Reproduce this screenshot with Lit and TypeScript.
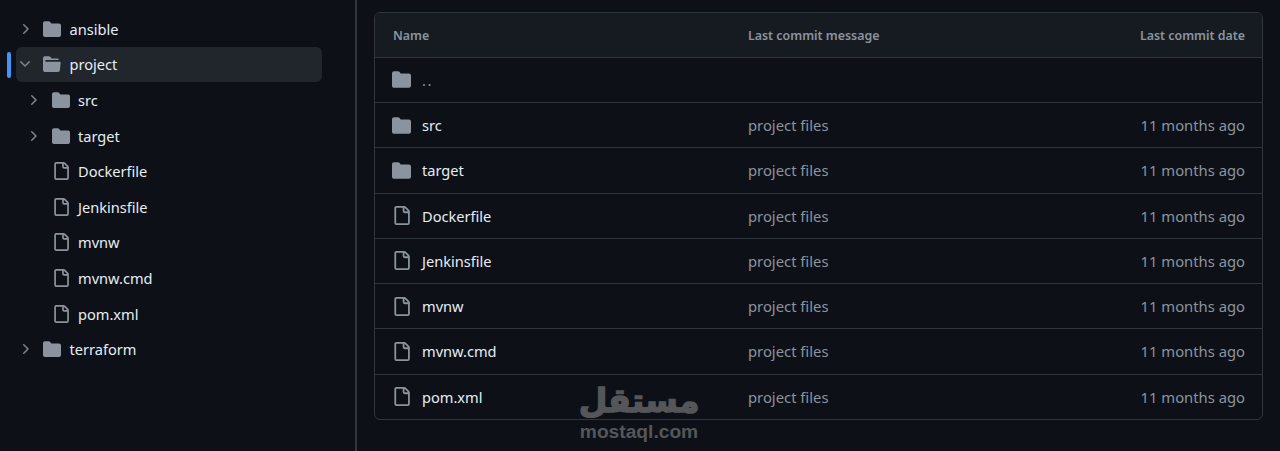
import { LitElement, html, css, svg } from "lit";
import { customElement } from "lit/decorators.js";

const P = {
  folder: "M1.75 1A1.75 1.75 0 0 0 0 2.75v10.5C0 14.216.784 15 1.75 15h12.5A1.75 1.75 0 0 0 16 13.25v-8.5A1.75 1.75 0 0 0 14.25 3H7.5a.25.25 0 0 1-.2-.1l-.9-1.2C6.07 1.26 5.55 1 5 1H1.75Z",
  open: "M.513 1.513A1.75 1.75 0 0 1 1.75 1h3.5c.55 0 1.07.26 1.4.7l.9 1.2a.25.25 0 0 0 .2.1H13a1 1 0 0 1 1 1v.5H2.75a.75.75 0 0 0 0 1.5h11.978a1 1 0 0 1 .994 1.117L15 13.25A1.75 1.75 0 0 1 13.25 15H1.75A1.75 1.75 0 0 1 0 13.25V2.75c0-.464.184-.91.513-1.237Z",
  file: "M2 1.75C2 .784 2.784 0 3.75 0h6.586c.464 0 .909.184 1.237.513l2.914 2.914c.329.328.513.773.513 1.237v9.586A1.75 1.75 0 0 1 13.25 16h-9.5A1.75 1.75 0 0 1 2 14.25Zm1.75-.25a.25.25 0 0 0-.25.25v12.5c0 .138.112.25.25.25h9.5a.25.25 0 0 0 .25-.25V6h-2.75A1.75 1.75 0 0 1 9 4.25V1.5Zm6.75.062V4.25c0 .138.112.25.25.25h2.688l-.011-.013-2.914-2.914-.013-.011Z",
  right: "M6.22 3.22a.75.75 0 0 1 1.06 0l4.25 4.25a.75.75 0 0 1 0 1.06l-4.25 4.25a.751.751 0 0 1-1.042-.018.751.751 0 0 1-.018-1.042L9.94 8 6.22 4.28a.75.75 0 0 1 0-1.06Z",
  down: "M12.78 5.22a.749.749 0 0 1 0 1.06l-4.25 4.25a.749.749 0 0 1-1.06 0L3.22 6.28a.749.749 0 1 1 1.06-1.06L8 8.939l3.72-3.719a.749.749 0 0 1 1.06 0Z",
};
type IconName = keyof typeof P;
const icon = (n: IconName, cls = "ic") =>
  html`<svg class=${cls} viewBox="0 0 16 16" aria-hidden="true">${svg`<path d=${P[n]}></path>`}</svg>`;

type Node = { name: string; kind: "folder" | "open" | "file"; depth: number; chev?: IconName; active?: boolean };
const tree: Node[] = [
  { name: "ansible", kind: "folder", depth: 0, chev: "right" },
  { name: "project", kind: "open", depth: 0, chev: "down", active: true },
  { name: "src", kind: "folder", depth: 1, chev: "right" },
  { name: "target", kind: "folder", depth: 1, chev: "right" },
  { name: "Dockerfile", kind: "file", depth: 1 },
  { name: "Jenkinsfile", kind: "file", depth: 1 },
  { name: "mvnw", kind: "file", depth: 1 },
  { name: "mvnw.cmd", kind: "file", depth: 1 },
  { name: "pom.xml", kind: "file", depth: 1 },
  { name: "terraform", kind: "folder", depth: 0, chev: "right" },
];
const rows: { name: string; kind: IconName; msg: string; date: string; up?: boolean }[] = [
  { name: "..", kind: "folder", msg: "", date: "", up: true },
  { name: "src", kind: "folder", msg: "project files", date: "11 months ago" },
  { name: "target", kind: "folder", msg: "project files", date: "11 months ago" },
  { name: "Dockerfile", kind: "file", msg: "project files", date: "11 months ago" },
  { name: "Jenkinsfile", kind: "file", msg: "project files", date: "11 months ago" },
  { name: "mvnw", kind: "file", msg: "project files", date: "11 months ago" },
  { name: "mvnw.cmd", kind: "file", msg: "project files", date: "11 months ago" },
  { name: "pom.xml", kind: "file", msg: "project files", date: "11 months ago" },
];

@customElement("app-root")
export class AppRoot extends LitElement {
  static styles = css`
    :host {
      display: block;
      position: relative;
      width: 1280px;
      height: 451px;
      overflow: hidden;
      background: #0d1117;
      color: #e6edf3;
      font-family: "Noto Sans", "Open Sans", sans-serif;
    }
    .page { display: flex; height: 100%; }
    .side {
      flex: none;
      box-sizing: border-box;
      border-right: 2px solid #30363d;
      width: 357px;
      padding: 11px 0 0 16px;
      display: flex;
      flex-direction: column;
    }
    .node {
      position: relative;
      width: 306px;
      height: 35.6px;
      flex: none;
      display: flex;
      align-items: center;
      border-radius: 6px;
      font-size: 14.6px;
      color: #e6edf3;
    }
    .node.active { background: #21262d; }
    .node.active::before {
      content: "";
      position: absolute;
      left: -9px;
      top: 5px;
      width: 4px;
      height: 26px;
      border-radius: 3px;
      background: #4493f8;
    }
    .d1 { padding-left: 8.5px; }
    .slot { width: 18px; height: 18px; flex: none; display: flex; align-items: center; justify-content: center; margin-right: 9px; }
    .chev { width: 16px; height: 16px; fill: #7d8590; margin-left: -1px; }
    .ic { width: 18px; height: 18px; flex: none; fill: #8b949e; margin-right: 8.5px; }
    .main { flex: 1; min-width: 0; padding: 12px 17px 0 17px; }
    .table {
      width: 889px;
      box-sizing: border-box;
      border: 1px solid #30363d;
      border-radius: 6px;
      overflow: hidden;
    }
    .row {
      display: grid;
      grid-template-columns: 355px 1fr auto;
      align-items: center;
      height: 45.25px;
      box-sizing: border-box;
      padding: 0 17px 0 17px;
      border-top: 1px solid #30363d;
      font-size: 14.8px;
    }
    .head {
      height: 43.8px;
      border-top: 0;
      padding: 1px 17px 0 18px;
      grid-template-columns: 354px 1fr auto;
      background: #161b22;
      color: #8b949e;
      font-size: 12.4px;
      font-weight: 600;
    }
    .name { display: flex; align-items: center; color: #e6edf3; font-size: 14.6px; }
    .name .ic { width: 19px; height: 19px; margin-right: 11px; }
    .up { color: #8b949e; letter-spacing: 1.5px; }
    .muted { color: #8b949e; }
    .row > .muted:nth-child(2), .head > span:nth-child(2) { padding-left: 1px; }
    .mark {
      position: absolute;
      left: 580px;
      top: 380px;
      width: 118px;
      display: flex;
      flex-direction: column;
      align-items: center;
      color: #555659;
      pointer-events: none;
    }
    .ar {
      font-family: "DejaVu Sans", sans-serif;
      font-weight: 700;
      font-size: 33px;
      line-height: 42px;
      height: 42px;
      padding-top: 0;
      white-space: nowrap;
      -webkit-text-stroke: 1.5px #555659;
    }
    .en {
      font-family: "Liberation Sans", sans-serif;
      font-weight: 700;
      font-size: 19.2px;
      line-height: 20px;
      margin-top: 0;
    }
  `;

  render() {
    return html`
      <div class="page">
        <aside class="side">
          ${tree.map(
            (n) => html`
              <div class="node ${n.active ? "active" : ""} ${n.depth ? "d1" : ""}">
                <span class="slot">${n.chev ? icon(n.chev, "chev") : ""}</span>
                ${icon(n.kind === "open" ? "open" : n.kind)}
                <span>${n.name}</span>
              </div>
            `,
          )}
        </aside>
        <main class="main">
          <div class="table">
            <div class="row head">
              <span>Name</span>
              <span>Last commit message</span>
              <span>Last commit date</span>
            </div>
            ${rows.map(
              (r) => html`
                <div class="row">
                  <span class="name">${icon(r.kind)}<span class=${r.up ? "up" : ""}>${r.name}</span></span>
                  <span class="muted">${r.msg}</span>
                  <span class="muted">${r.date}</span>
                </div>
              `,
            )}
          </div>
        </main>
      </div>
      <div class="mark">
        <div class="ar" dir="rtl" lang="ar">مستقل</div>
        <div class="en">mostaql.com</div>
      </div>
    `;
  }
}
